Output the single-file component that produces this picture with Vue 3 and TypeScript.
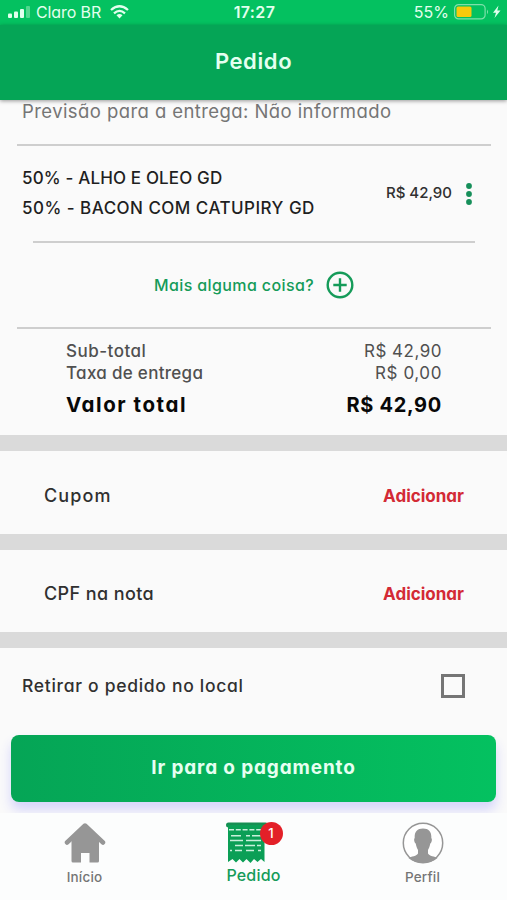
<script setup lang="ts">
interface OrderItem {
  lines: string[]
  price: string
}

interface Total {
  label: string
  value: string
}

interface Extra {
  label: string
  kind: string
}

const item: OrderItem = {
  lines: ['50% - ALHO E OLEO GD', '50% - BACON COM CATUPIRY GD'],
  price: 'R$ 42,90',
}

const totals: Total[] = [
  { label: 'Sub-total', value: 'R$ 42,90' },
  { label: 'Taxa de entrega', value: 'R$ 0,00' },
]

const extras: Extra[] = [
  { label: 'Cupom', kind: 'coupon' },
  { label: 'CPF na nota', kind: 'cpf' },
]
</script>

<template>
  <div class="screen">
    <div class="status">
      <div class="status-left">
        <svg class="signal" width="23" height="13" viewBox="0 0 23 13">
          <rect x="0" y="7.5" width="4" height="4.5" rx="1" fill="#e2ffee" />
          <rect x="6" y="5.5" width="4" height="6.500" rx="1" fill="#e2ffee" />
          <rect x="12" y="3" width="4" height="9" rx="1" fill="#e2ffee" />
          <rect x="18" y="0" width="4" height="12" rx="1" fill="#52d88f" />
        </svg>
        <span class="carrier">Claro BR</span>
        <svg class="wifi" width="19" height="14" viewBox="0 0 19 14" fill="none" stroke="#e2ffee" stroke-width="2.300">
          <path d="M1 5 Q9.500 -2.500 18 5" />
          <path d="M4 8.300 Q9.500 3.500 15 8.300" />
          <path d="M6.500 10.200 Q9.500 7.600 12.500 10.200 L9.500 13.400 Z" fill="#e2ffee" stroke="none" />
        </svg>
      </div>
      <span class="clock">17:27</span>
      <div class="status-right">
        <span class="percent">55%</span>
        <svg width="47" height="16" viewBox="0 0 47 16">
          <rect x="0.600" y="0.600" width="30.500" height="14.300" rx="4" fill="none" stroke="#7fe0aa" stroke-width="1.200" />
          <rect x="2.500" y="2.500" width="15" height="10.500" rx="1.500" fill="#f8ca0c" />
          <path d="M33 5.500 Q35.200 7.800 33 10.300 Z" fill="#7fe0aa" />
          <path d="M44.500 1.500 L39 8.800 H42 L40.500 14 L46.500 6.500 H43.300 Z" fill="#e2ffee" />
        </svg>
      </div>
    </div>

    <header class="header"><h1>Pedido</h1></header>

    <main>
      <p class="forecast">Previsão para a entrega: Não informado</p>
      <section class="order">
        <div class="lines">
          <span v-for="(line, i) in item.lines" :key="line" :class="'line line-' + i">{{ line }}</span>
        </div>
        <span class="price">{{ item.price }}</span>
        <svg class="dots" width="8" height="24" viewBox="0 0 8 24" fill="#168f5a">
          <circle cx="4" cy="4" r="2.900" />
          <circle cx="4" cy="12" r="2.900" />
          <circle cx="4" cy="20" r="2.900" />
        </svg>
      </section>
      <section class="more">
        <span>Mais alguma coisa?</span>
        <svg width="28" height="28" viewBox="0 0 28 28" fill="none" stroke="#159b59" stroke-width="2.400">
          <circle cx="14" cy="14" r="12.300" />
          <path d="M14 7.300 V20.700 M7.300 14 H20.700" />
        </svg>
      </section>
      <section class="totals">
        <div v-for="(t, i) in totals" :key="t.label" :class="'total total-' + i">
          <span class="label">{{ t.label }}</span>
          <span class="value">{{ t.value }}</span>
        </div>
        <div class="grand">
          <span class="label">Valor total</span>
          <span class="value">R$ 42,90</span>
        </div>
      </section>
      <section v-for="e in extras" :key="e.kind" :class="['extra', e.kind]">
        <span class="label">{{ e.label }}</span>
        <a class="add">Adicionar</a>
      </section>
      <section class="pickup">
        <span>Retirar o pedido no local</span>
        <i class="checkbox"></i>
      </section>
      <div class="action">
        <button type="button">Ir para o pagamento</button>
      </div>
    </main>

    <nav class="tabs">
      <div class="tab home">
        <svg width="42" height="42" viewBox="0 0 42 42" fill="#969696" stroke="#969696" stroke-linejoin="round" stroke-linecap="round">
          <path d="M3 20.500 L21 3.500 L39 20.500" fill="none" stroke-width="4.500" />
          <path d="M9 17 L21 5 L33.500 17 V39 H25.500 V31 H17.500 V39 H9 Z" stroke-width="3" />
          <path d="M17 42 V31 H25.500 V42 Z" fill="#fcfdfd" stroke="none" />
        </svg>
        <span>Início</span>
      </div>
      <div class="tab order-tab">
        <div class="receipt">
          <svg width="42" height="42" viewBox="0 0 42 42">
            <rect x="0" y="0.500" width="42" height="5" rx="2.500" fill="#168f53" />
            <path d="M2 3 H38.500 V40 L35 37 L31.500 40 L28 37 L24.500 41 L20.500 37 L17 40.500 L13.500 37 L10 40.500 L6.500 37 L2 40 Z" fill="#0b9f56" />
            <g stroke="#c9f0db" stroke-width="1.500" fill="none">
              <path d="M3 7.700 H38" stroke-dasharray="5 1.800" />
              <path d="M5 13.700 H15 M20 13.700 H24 M26 13.700 H35" />
              <path d="M4 18.500 H17 M20 18.500 H35" />
              <path d="M9 23.500 H17 M19 23.500 H29 M31 23.500 H35" />
              <path d="M4 28.500 H6 M9 28.500 H16 M20 28.500 H28 M32 28.500 H35" />
            </g>
          </svg>
          <b class="badge">1</b>
        </div>
        <span>Pedido</span>
      </div>
      <div class="tab profile">
        <svg width="42" height="42" viewBox="0 0 42 42">
          <circle cx="21" cy="21" r="19.700" fill="#fff" stroke="#969696" stroke-width="1.500" />
          <path d="M21 6.500 C15 6.500 12.300 10 12.700 16 C11.500 17 12.300 20.500 13.700 21.500 C14.300 25 15.500 27 16 28 V31.500 C15 34 9 34.500 6.500 36 C14.500 42.600 27.500 42.600 35.500 36 C33 34.500 27 34 26 31.500 V28 C26.500 27 27.700 25 28.300 21.500 C29.700 20.500 30.500 17 29.300 16 C29.700 10 27 6.500 21 6.500 Z" fill="#969696" />
        </svg>
        <span>Perfil</span>
      </div>
    </nav>
  </div>
</template>

<style>
body {
  margin: 0;
  background: #fafafa;
}
</style>

<style scoped>
.screen {
  width: 507px;
  height: 900px;
  display: flex;
  flex-direction: column;
  overflow: hidden;
  background: #fafafa;
  color: #303030;
  font-family: Inter, "Open Sans", sans-serif;
  font-feature-settings: "cv11";
  white-space: nowrap;
}
.status {
  height: 25px;
  box-sizing: border-box;
  padding: 0 6px 1px 8px;
  display: grid;
  grid-template-columns: 1fr auto 1fr;
  align-items: center;
  background: #04c160;
  color: #e2ffee;
  font-size: 16px;
}
.status-left,
.status-right {
  display: flex;
  align-items: center;
}
.status-right {
  justify-content: flex-end;
  gap: 5px;
}
.carrier {
  margin-left: 5px;
  letter-spacing: -0.1px;
}
.wifi {
  margin-left: 9px;
}
.clock {
  font-weight: 600;
  letter-spacing: 0.4px;
}
.header {
  height: 75px;
  box-sizing: border-box;
  padding-bottom: 3px;
  flex: none;
  display: flex;
  align-items: center;
  justify-content: center;
  background: #05a556;
  box-shadow: 0 1px 4px rgba(0, 0, 0, 0.4);
  position: relative;
}
h1 {
  margin: 0;
  color: #e4fff0;
  font-size: 22px;
  font-weight: 600;
  letter-spacing: 0.6px;
}
main {
  height: 713px;
  flex: none;
}
.forecast {
  margin: 0 16px 0 17px;
  padding: 0 0 0 5px;
  height: 44px;
  line-height: 23px;
  border-bottom: 2px solid #cecece;
  color: #757575;
  font-size: 18.5px;
  letter-spacing: 0.42px;
}
.order {
  height: 95px;
  margin: 0 32px 0 33px;
  border-bottom: 2px solid #cecece;
  display: flex;
  align-items: center;
}
.lines {
  margin: 0 0 1px -11px;
  flex: 1;
  display: flex;
  flex-direction: column;
}
.line {
  font-size: 17px;
  line-height: 30px;
  color: #1f1f1f;
  font-weight: 450;
  letter-spacing: 0.15px;
}
.line-1 {
  letter-spacing: 0.47px;
}
.price {
  margin-bottom: 2px;
  font-size: 15px;
  font-weight: 500;
}
.dots {
  margin: 0 2px 0 13px;
}
.more {
  height: 84px;
  margin: 0 17px 0 17px;
  border-bottom: 2px solid #cecece;
  display: flex;
  align-items: center;
  justify-content: center;
  gap: 12px;
  color: #159b59;
  font-size: 16px;
  font-weight: 500;
  letter-spacing: 0.38px;
  margin-right: 16px;
}
.more span {
  margin-bottom: 1px;
}
.totals {
  height: 106px;
  box-sizing: border-box;
  padding: 11px 65px 0 66px;
}
.total,
.grand {
  display: flex;
  justify-content: space-between;
  line-height: 22px;
}
.total {
  color: #505050;
  font-size: 17px;
  letter-spacing: 0.5px;
}
.total-1 {
  letter-spacing: 0.6px;
}
.total-1 .label {
  letter-spacing: 0.3px;
}
.grand {
  margin-top: 8px;
  line-height: 26px;
  color: #080808;
  font-size: 20px;
  font-weight: 700;
  letter-spacing: 0.7px;
}
.extra {
  height: 83px;
  padding: 0 43px 0 44px;
  border-top: 16px solid #dadada;
  display: flex;
  align-items: center;
  justify-content: space-between;
  font-size: 18px;
}
.extra.cpf {
  height: 82px;
}
.label,
.pickup {
  font-weight: 450;
}
.grand .label {
  font-weight: 700;
  font-size: 20.5px;
  letter-spacing: 1.55px;
}
.extra .add {
  margin-top: 6px;
  color: #d32a35;
  font-size: 17px;
  font-weight: 700;
}
.extra .label {
  margin-top: 5px;
  letter-spacing: 0.4px;
}
.extra.coupon .label {
  letter-spacing: 1.1px;
}
.pickup {
  height: 75px;
  padding: 0 42px 0 22px;
  border-top: 16px solid #dadada;
  display: flex;
  align-items: center;
  justify-content: space-between;
  font-size: 17.5px;
  letter-spacing: 0.7px;
}
.checkbox {
  width: 18px;
  height: 18px;
  border: 3px solid #757575;
}
.action {
  height: 90px;
  padding: 12px 11px 0;
  box-sizing: border-box;
}
button {
  width: 485px;
  height: 67px;
  padding: 0 0 2px;
  border: 0;
  border-radius: 8px;
  background: linear-gradient(90deg, #05a556, #04c160);
  box-shadow: 0 8px 12px rgba(65, 65, 255, 0.2);
  color: #e6fff1;
  font: inherit;
  font-size: 19px;
  font-weight: 700;
  font-feature-settings: inherit;
  letter-spacing: 0.85px;
}
.tabs {
  height: 87px;
  flex: none;
  display: grid;
  grid-template-columns: repeat(3, 169px);
  background: #fcfdfd;
  position: relative;
}
.tab {
  padding-top: 9px;
  display: flex;
  flex-direction: column;
  align-items: center;
  color: #757575;
  font-size: 13.5px;
  font-weight: 450;
  letter-spacing: 0.2px;
}
.tab > span {
  line-height: 20px;
  margin-top: 3px;
}
.order-tab > span {
  color: #159b59;
  font-size: 16px;
  font-weight: 500;
  margin-top: 1px;
}
.receipt {
  height: 42px;
  position: relative;
  left: -7px;
}
.badge {
  position: absolute;
  left: 34px;
  top: 0;
  width: 23px;
  height: 23px;
  border-radius: 50%;
  background: #e32028;
  color: #fff;
  font-size: 13px;
  font-weight: 500;
  line-height: 23px;
  text-align: center;
}
</style>
